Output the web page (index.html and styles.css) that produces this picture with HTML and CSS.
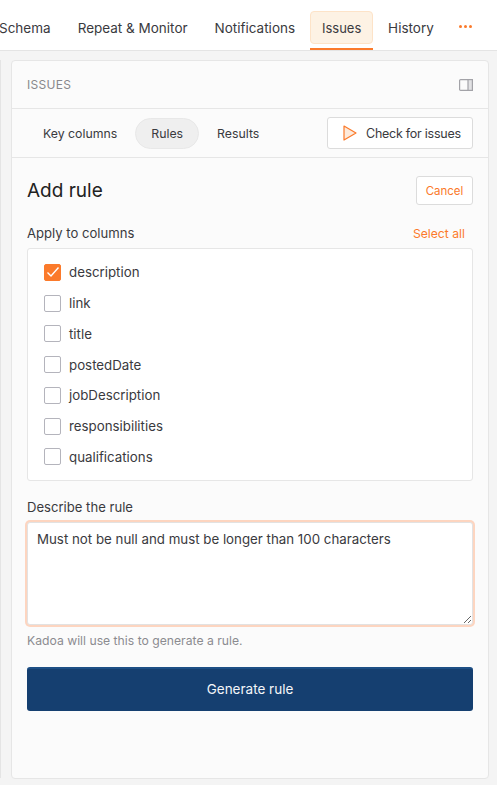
FILE: index.html
```html
<!DOCTYPE html>
<html lang="en">
<head>
<title>Issues</title>
<meta charset="UTF-8">
<meta name="viewport" content="width=device-width, initial-scale=1">
<link rel="stylesheet" href="styles.css">
</head>
<body>

<div class="navbar">
  <a class="nav-first">Schema</a>
  <a>Repeat &amp; Monitor</a>
  <a>Notifications</a>
  <a class="active"><span>Issues</span></a>
  <a>History</a>
  <span class="more"><i></i><i></i><i></i></span>
</div>

<div class="content">
  <div class="sliver"></div>
  <div class="panel">
    <div class="panel-head">
      <span>ISSUES</span>
      <svg width="14" height="12" viewBox="0 0 14 12" fill="none" stroke="#a3a3a8" stroke-width="1.2"><rect x="0.6" y="0.6" width="12.8" height="10.8" rx="1"/><rect x="9" y="0.6" width="4.4" height="10.8" fill="#e2e2e4"/></svg>
    </div>

    <div class="tabs">
      <a class="tab">Key columns</a>
      <a class="tab selected">Rules</a>
      <a class="tab">Results</a>
      <button class="check">
        <svg width="14" height="16" viewBox="0 0 14 16" fill="#fdeadb" stroke="#fb7a2b" stroke-width="1.2" stroke-linejoin="round"><path d="M1 1 L13 8 L1 15 Z"/></svg>
        Check for issues
      </button>
    </div>

    <div class="form">
      <div class="form-title">
        <h2>Add rule</h2>
        <button class="cancel">Cancel</button>
      </div>

      <div class="label-row">
        <span>Apply to columns</span>
        <a>Select all</a>
      </div>

      <div class="columns">
        <label class="col"><span class="box checked"><svg width="14" height="12" viewBox="0 0 14 12" fill="none" stroke="#fff" stroke-width="1.4"><path d="M1.5 6.5 L5 10 L12.5 1.5"/></svg></span>description</label>
        <label class="col"><span class="box"></span>link</label>
        <label class="col"><span class="box"></span>title</label>
        <label class="col"><span class="box"></span>postedDate</label>
        <label class="col"><span class="box"></span>jobDescription</label>
        <label class="col"><span class="box"></span>responsibilities</label>
        <label class="col"><span class="box"></span>qualifications</label>
      </div>

      <div class="describe">Describe the rule</div>
      <textarea class="rule">Must not be null and must be longer than 100 characters</textarea>
      <p class="hint">Kadoa will use this to generate a rule.</p>

      <button class="generate">Generate rule</button>
    </div>
  </div>
</div>

</body>
</html>
```

FILE: styles.css
```css
* {
  box-sizing: border-box;
}

body {
  font-family: Inter, "Noto Sans", sans-serif;
  margin: 0;
  height: 785px;
  overflow: hidden;
  background-color: #f4f4f4;
  color: #3a3a3e;
  font-size: 13.3px;
}

/* Top tabs */
.navbar {
  display: flex;
  align-items: flex-start;
  height: 51px;
  padding-top: 11px;
  background-color: #fff;
  border-bottom: 1px solid #e4e4e4;
  overflow: hidden;
  font-size: 13.5px;
}

.navbar a {
  display: block;
  height: 39px;
  line-height: 34px;
  margin-left: 3px;
  padding: 0 12px;
  white-space: nowrap;
}

.navbar a.nav-first {
  margin-left: -13px;
}

.navbar a.active {
  padding: 0;
  border-bottom: 2px solid #fb7a2b;
}

.active span {
  display: block;
  width: 63px;
  height: 33px;
  line-height: 32px;
  text-align: center;
  font-size: 13px;
  background-color: #fdf2e4;
  border: 1px solid #fde3c8;
  border-radius: 4px;
}

.more {
  display: flex;
  gap: 2px;
  margin: 14px 0 0 13px;
}

.more i {
  width: 3px;
  height: 3px;
  border-radius: 50%;
  background-color: #fb7a2b;
}

/* Main area */
.content {
  display: flex;
  gap: 10px;
  padding-top: 9px;
  height: 734px;
}

.sliver {
  width: 1px;
  height: 718px;
  background-color: #e4e4e4;
}

.panel {
  width: 478px;
  height: 719px;
  background-color: #fbfbfb;
  border: 1px solid #e6e6e6;
  border-radius: 4px;
}

.panel-head {
  display: flex;
  justify-content: space-between;
  align-items: center;
  height: 48px;
  padding: 0 15px;
  border-bottom: 1px solid #e6e6e6;
  color: #88888c;
  font-size: 12px;
  letter-spacing: 0.3px;
}

.tabs {
  display: flex;
  align-items: center;
  height: 49px;
  padding: 0 15px;
  border-bottom: 1px solid #e6e6e6;
  font-size: 12.3px;
}

.tab {
  padding: 0 16px;
  line-height: 31px;
  border-radius: 16px;
}

.tab.selected {
  padding: 0 15px;
  background-color: #efefef;
  border: 1px solid #e8e8e8;
  line-height: 29px;
  margin: 0 2px;
}

.check {
  display: flex;
  align-items: center;
  gap: 9px;
  margin-left: auto;
  width: 146px;
  height: 32px;
  padding: 0 0 0 15px;
  background-color: #fff;
  border: 1px solid #dcdcdc;
  border-radius: 3px;
  font: inherit;
  font-size: 12.5px;
  letter-spacing: -0.25px;
  color: inherit;
}

.form {
  padding: 18px 15px 0;
}

.form-title {
  display: flex;
  justify-content: space-between;
  align-items: center;
  height: 29px;
}

.form-title h2 {
  margin: 0;
  font-size: 19px;
  font-weight: 400;
  color: #222;
}

.cancel {
  width: 57px;
  height: 29px;
  padding: 0;
  background-color: #fff;
  border: 1px solid #dcdcdc;
  border-radius: 3px;
  font: inherit;
  font-size: 11.5px;
  color: #fb7a2b;
}

.label-row {
  display: flex;
  justify-content: space-between;
  align-items: center;
  margin-top: 20px;
  padding-right: 8px;
  line-height: 17px;
  font-size: 13.1px;
}

.label-row a {
  font-size: 12.2px;
  color: #fb7a2b;
}

.columns {
  margin-top: 6px;
  height: 233px;
  padding: 8px 16px;
  background-color: #fff;
  border: 1px solid #e6e6e6;
  border-radius: 3px;
}

.col {
  display: flex;
  align-items: center;
  gap: 8px;
  height: 30.75px;
}

.box {
  display: flex;
  align-items: center;
  justify-content: center;
  width: 17px;
  height: 17px;
  background-color: #fff;
  border: 1px solid #b4b4bc;
  border-radius: 2px;
}

.box.checked {
  background-color: #fb7a2b;
  border-color: #fb7a2b;
}

.describe {
  margin-top: 18px;
  line-height: 17px;
  font-size: 13.1px;
}

.rule {
  display: block;
  width: 100%;
  height: 103px;
  margin-top: 6px;
  padding: 8px 9px;
  background-color: #fff;
  border: 1px solid #e2e2e2;
  border-radius: 3px;
  box-shadow: 0 0 0 2px #fdd5c0;
  outline: none;
  font: inherit;
  color: #3a3a3e;
}

.hint {
  margin: 8px 0 0;
  line-height: 16px;
  font-size: 12.2px;
  color: #8b8b90;
}

.generate {
  display: block;
  width: 100%;
  height: 44px;
  margin-top: 18px;
  padding: 0 0 2px;
  background-color: #153f70;
  border: none;
  border-top: 2px solid #1d4f85;
  border-radius: 3px;
  font: inherit;
  font-size: 13.5px;
  color: #f4f6f9;
}
```
